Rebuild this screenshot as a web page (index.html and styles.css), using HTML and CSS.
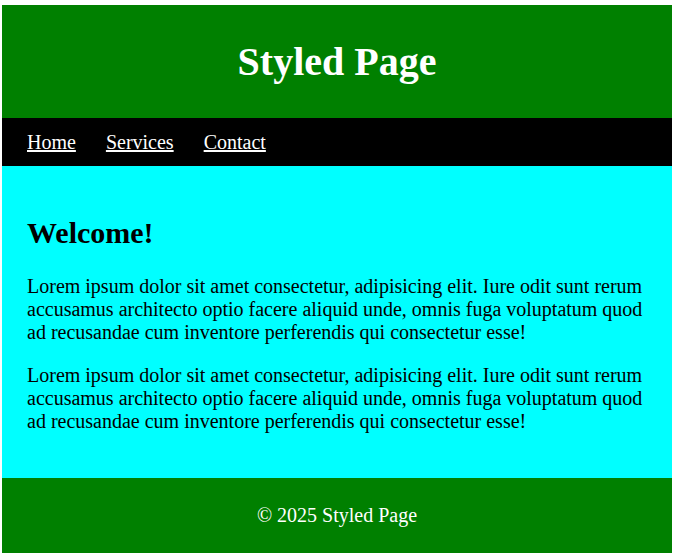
FILE: index.html
```html
<!DOCTYPE html>
<html lang="en">
<head>
<meta charset="utf-8">
<title>Styled Page</title>
<link rel="stylesheet" href="styles.css">
</head>
<body>
<div class="page">
  <header class="site-header">
    <h1 class="site-title">Styled Page</h1>
  </header>
  <nav class="site-nav">
    <a class="nav-link" href="#">Home</a>
    <a class="nav-link" href="#">Services</a>
    <a class="nav-link" href="#">Contact</a>
  </nav>
  <main class="content">
    <h2 class="content-title">Welcome!</h2>
    <p class="content-text">Lorem ipsum dolor sit amet consectetur, adipisicing elit. Iure odit sunt rerum accusamus architecto optio facere aliquid unde, omnis fuga voluptatum quod ad recusandae cum inventore perferendis qui consectetur esse!</p>
    <p class="content-text">Lorem ipsum dolor sit amet consectetur, adipisicing elit. Iure odit sunt rerum accusamus architecto optio facere aliquid unde, omnis fuga voluptatum quod ad recusandae cum inventore perferendis qui consectetur esse!</p>
  </main>
  <footer class="site-footer">
    <p class="footer-text">&copy; 2025 Styled Page</p>
  </footer>
</div>
</body>
</html>
```

FILE: styles.css
```css
html, body {
  background: #ffffff;
}

body {
  margin: 5px 3px 6px 2px;
  font-family: "Liberation Serif", "Times New Roman", serif;
  font-size: 20px;
  color: #000000;
}

.page {
  display: flex;
  flex-direction: column;
}

.site-header {
  background: #008000;
  color: #ffffff;
  text-align: center;
  padding: 34px 0 33px;
}

.site-title {
  margin: 0;
  font-size: 40px;
  font-weight: bold;
  line-height: 46px;
}

.site-nav {
  background: #000000;
  display: flex;
  gap: 30px;
  padding: 13px 25px 12px;
  line-height: 23px;
}

.nav-link {
  color: #ffffff;
  text-decoration: underline;
}

.content {
  background: #00ffff;
  padding: 25px;
}

.content-title {
  font-size: 30px;
  font-weight: bold;
  line-height: 34.5px;
  margin: 24.9px 0;
}

.content-text {
  margin: 20px 0;
  line-height: 23px;
}

.site-footer {
  background: #008000;
  color: #ffffff;
  text-align: center;
  padding: 26px 0 26px;
}

.footer-text {
  margin: 0;
  line-height: 23px;
}
```
